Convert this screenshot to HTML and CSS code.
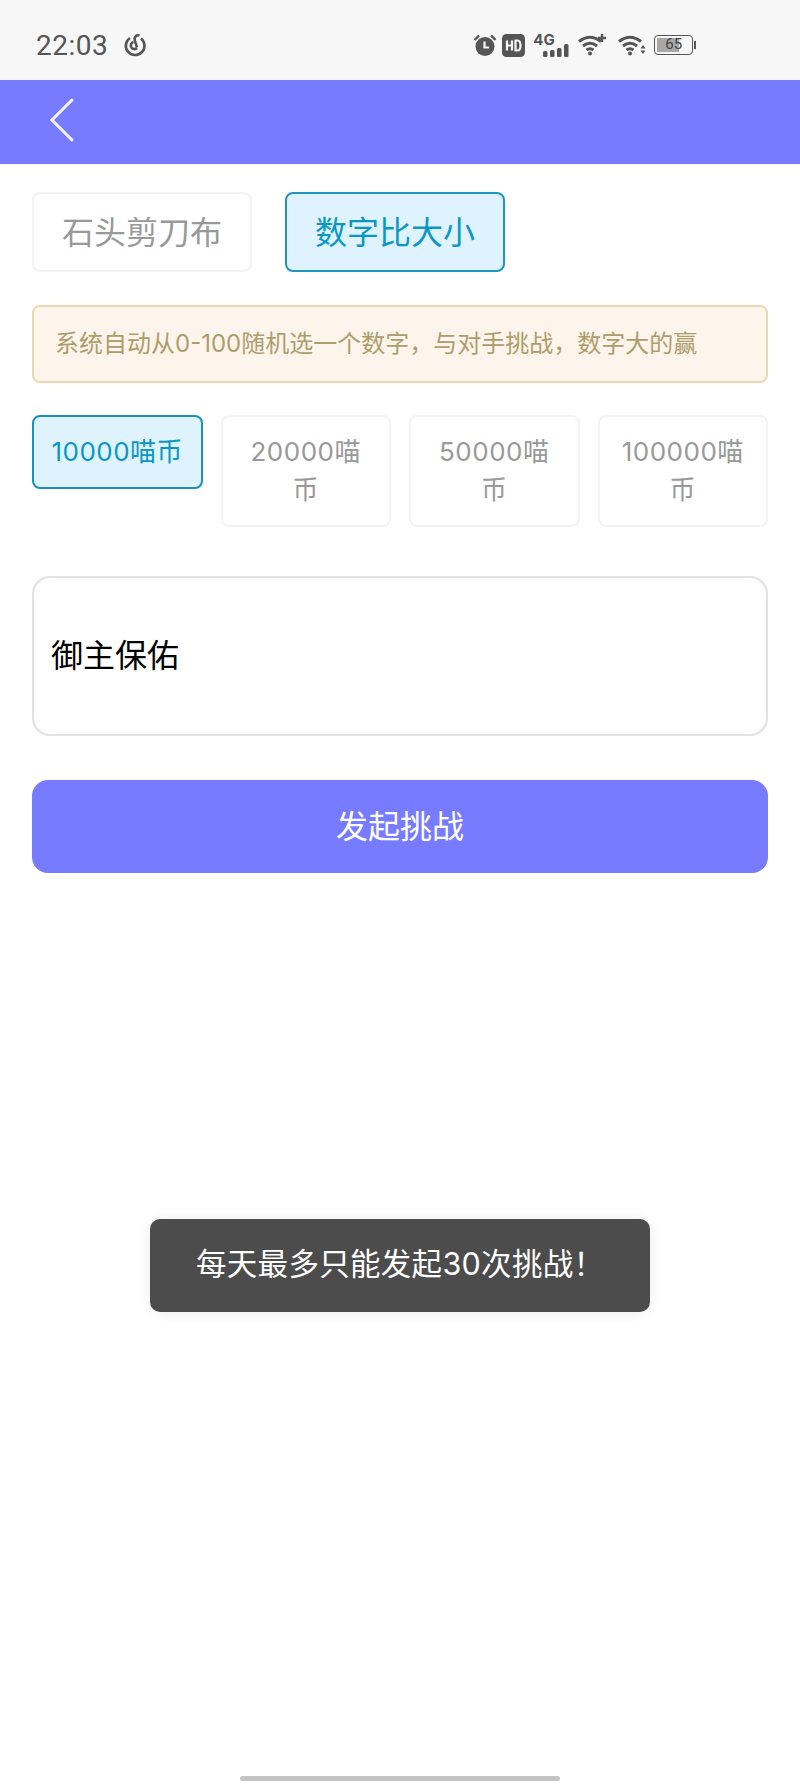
FILE: index.html
```html
<!DOCTYPE html>
<html lang="zh-CN">
<head>
    <meta charset="UTF-8">
    <meta name="viewport" content="width=device-width, initial-scale=1.0">
    <title>发起挑战</title>
    <link rel="stylesheet" href="styles.css">
</head>
<body>

<div class="page">
    <div class="status-bar">
        <span class="time">22:03</span>
        <svg class="app-icon" width="24" height="24" viewBox="0 0 24 24" fill="none" stroke="#555" stroke-width="2.6">
            <path d="M16.500 2.500C13 1.500 11 4 11.800 7.500L14 14.500"/>
            <path d="M7 5A9.300 9.300 0 1 0 18 5.500"/>
            <path d="M14 15A3.600 3.600 0 1 1 10.500 9"/>
        </svg>
        <div class="status-icons">
            <svg width="24" height="24" viewBox="0 0 24 24">
                <circle cx="12" cy="13.500" r="9.500" fill="#555"/>
                <path d="M1.500 7L6 2.500M22.500 7L18 2.500" stroke="#555" stroke-width="2.400"/>
                <path d="M11.500 8.500V14.500H16" fill="none" stroke="#f7f7f7" stroke-width="2.200"/>
            </svg>
            <svg class="hd" width="23" height="23" viewBox="0 0 23 23">
                <rect width="23" height="23" rx="4.500" fill="#555"/>
                <path d="M5 6.500V16.500M10 6.500V16.500M5 11.500H10M13.500 6.500V16.500H15.500Q18.500 16.500 18.500 11.500T15.500 6.500Z" fill="none" stroke="#f7f7f7" stroke-width="2.200"/>
            </svg>
            <div class="signal">
                <span class="net">4G</span>
                <svg width="26" height="13" viewBox="0 0 26 13" fill="#555">
                    <rect x="0" y="7" width="4.500" height="6" rx="1.500"/>
                    <rect x="7" y="6" width="4.500" height="7" rx="1.500"/>
                    <rect x="14" y="4" width="4.500" height="9" rx="1.500"/>
                    <rect x="21" y="0" width="4.500" height="13" rx="1.500"/>
                </svg>
            </div>
            <svg class="wifi-first" width="28" height="22" viewBox="0 0 28 22" fill="none" stroke="#555" stroke-width="3">
                <path d="M1 7.500Q12 -1 23 7.500"/>
                <path d="M5 12Q12 6.500 19 12"/>
                <path d="M8.500 16Q12 13.500 15.500 16"/>
                <circle cx="12" cy="19.500" r="2" fill="#555" stroke="none"/>
                <path d="M24 0V8M20 4H28" stroke-width="2.400"/>
            </svg>
            <svg class="wifi-second" width="28" height="22" viewBox="0 0 28 22" fill="none" stroke="#555" stroke-width="3">
                <path d="M1 7.500Q12 -1 23 7.500"/>
                <path d="M5 12Q12 6.500 19 12"/>
                <path d="M8.500 16Q12 13.500 15.500 16"/>
                <circle cx="12" cy="19.500" r="2" fill="#555" stroke="none"/>
                <path d="M25 11L27.500 14.500H22.500ZM25 20L27.500 16.500H22.500Z" fill="#555" stroke="none"/>
            </svg>
            <div class="battery">
                <div class="battery-body">
                    <div class="battery-level"></div>
                    <span class="battery-text">65</span>
                </div>
                <div class="battery-tip"></div>
            </div>
        </div>
    </div>

    <div class="nav-bar">
        <svg width="26" height="46" viewBox="0 0 26 46" fill="none" stroke="#f4f4ff" stroke-width="3" stroke-linecap="round">
            <path d="M23 3L3 23L23 43"/>
        </svg>
    </div>

    <div class="content">
        <div class="tabs">
            <div class="tab">石头剪刀布</div>
            <div class="tab active">数字比大小</div>
        </div>

        <div class="notice">系统自动从0-100随机选一个数字，与对手挑战，数字大的赢</div>

        <div class="amounts">
            <div class="amount active">10000喵币</div>
            <div class="amount">20000喵币</div>
            <div class="amount">50000喵币</div>
            <div class="amount">100000喵币</div>
        </div>

        <div class="blessing">御主保佑</div>

        <button class="submit">发起挑战</button>
    </div>

    <div class="toast">每天最多只能发起30次挑战！</div>
    <div class="home-bar"></div>
</div>

</body>
</html>
```

FILE: styles.css
```css
* {
    box-sizing: border-box;
}

body {
    margin: 0;
    background: #fff;
    font-family: Inter, "Noto Sans CJK SC", sans-serif;
}

.page {
    position: relative;
    height: 1784px;
    overflow: hidden;
}

.status-bar {
    display: flex;
    align-items: center;
    height: 80px;
    padding: 10px 0 0 36px;
    background: #f7f7f7;
}

.time {
    font-family: Roboto, sans-serif;
    font-size: 28px;
    color: #555;
    letter-spacing: 0.5px;
}

.app-icon {
    margin-left: 15px;
}

.status-icons {
    display: flex;
    align-items: center;
    margin-left: 326px;
}

.hd {
    margin-left: 5px;
}

.signal {
    display: flex;
    flex-direction: column;
    align-items: flex-start;
    width: 36px;
    height: 24px;
    margin-left: 8px;
}

.net {
    font-size: 15px;
    font-weight: 700;
    line-height: 13px;
    color: #555;
}

.signal svg {
    align-self: flex-end;
    margin-top: -2px;
}

.wifi-first {
    margin-left: 9px;
}

.wifi-second {
    margin-left: 12px;
}

.battery {
    display: flex;
    align-items: center;
    margin-left: 8px;
}

.battery-body {
    position: relative;
    width: 39px;
    height: 20px;
    padding: 2px;
    border: 1.500px solid #555;
    border-radius: 4px;
}

.battery-level {
    width: 65%;
    height: 100%;
    background: #a8a8a8;
}

.battery-text {
    position: absolute;
    top: 0;
    left: 0;
    width: 100%;
    font-family: Roboto, sans-serif;
    font-size: 15px;
    line-height: 17px;
    text-align: center;
    color: #444;
}

.battery-tip {
    width: 2px;
    height: 8px;
    margin-left: 1px;
    background: #555;
}

.nav-bar {
    display: flex;
    align-items: center;
    height: 84px;
    padding: 0 0 5px 49px;
    background: #767bff;
}

.content {
    padding: 28px 32px 0;
}

.tabs {
    display: flex;
    gap: 33px;
}

.tab {
    width: 220px;
    height: 80px;
    border: 2px solid #f3f3f3;
    border-radius: 8px;
    font-size: 32px;
    line-height: 78px;
    text-align: center;
    color: #999;
}

.tab.active {
    border-color: #1e96c0;
    background: #dff3fe;
    color: #0a97c6;
}

.notice {
    height: 78px;
    margin-top: 33px;
    padding-left: 21px;
    border: 2px solid #e8d9b4;
    border-radius: 8px;
    background: #fdf5eb;
    font-size: 24px;
    line-height: 74px;
    color: #ae9d6c;
    white-space: nowrap;
}

.amounts {
    display: flex;
    align-items: flex-start;
    gap: 18px;
    margin-top: 32px;
}

.amount {
    flex: 1;
    padding: 16px;
    border: 2px solid #f3f3f3;
    border-radius: 8px;
    font-size: 26px;
    line-height: 38px;
    letter-spacing: 0.5px;
    text-align: center;
    color: #999;
}

.amount.active {
    border-color: #1a90ba;
    background: #dff3fe;
    color: #0a97c6;
}

.blessing {
    height: 160px;
    margin-top: 49px;
    padding-left: 17px;
    border: 2px solid #e2e2e2;
    border-radius: 18px;
    font-size: 32px;
    line-height: 156px;
    color: #000;
}

.submit {
    display: block;
    width: 100%;
    height: 93px;
    margin-top: 44px;
    padding-bottom: 6px;
    border: none;
    border-radius: 16px;
    background: #767bff;
    font-family: inherit;
    font-size: 32px;
    color: #fff;
}

.toast {
    position: absolute;
    top: 1219px;
    left: 150px;
    width: 500px;
    height: 93px;
    padding-left: 46px;
    border-radius: 10px;
    background: #4c4c4c;
    box-shadow: 0 0 14px rgba(0, 0, 0, 0.08);
    font-size: 30.500px;
    line-height: 90px;
    letter-spacing: 0.3px;
    color: #fff;
}

.home-bar {
    position: absolute;
    bottom: 3px;
    left: 240px;
    width: 320px;
    height: 5px;
    border-radius: 3px;
    background: #c4c4c4;
}
```
